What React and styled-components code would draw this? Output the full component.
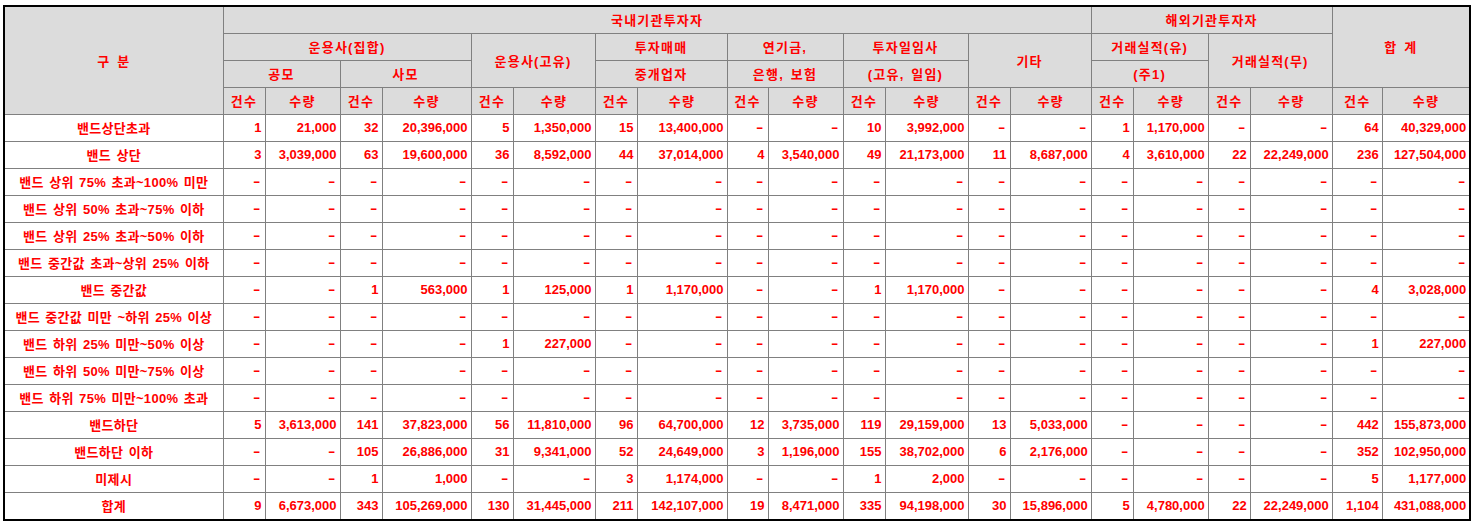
import React from "react";
import styled, { createGlobalStyle } from "styled-components";

const GlobalStyle = createGlobalStyle`
  body {
    margin: 0;
    background: #fff;
  }
`;

const Frame = styled.div`
  display: inline-block;
  margin: 5px 0 0 3px;
  border: 2px solid #000;
`;

const Table = styled.table`
  width: 1464px;
  table-layout: fixed;
  border-collapse: collapse;
  border-style: hidden;
  font-family: "Liberation Sans", "Noto Sans CJK KR", sans-serif;
  font-size: 13px;
  font-weight: bold;
  color: #ff0000;
`;

const Row = styled.tr`
  height: ${(p) => (p.first ? 26 : 27)}px;
`;

const Head = styled.th`
  background: #dcdcdc;
  border: 1px solid #808080;
  font-weight: bold;
  text-align: center;
  padding: 0;
  letter-spacing: 1.2px;
  word-spacing: 2px;
  white-space: nowrap;
`;

const Label = styled.td`
  border: 1px solid #808080;
  text-align: center;
  padding: 0;
  letter-spacing: 0.3px;
  word-spacing: 1.5px;
  white-space: nowrap;
`;

const Num = styled.td`
  border: 1px solid #808080;
  text-align: right;
  padding: 0 3px 0 0;
  white-space: nowrap;
`;

const Dash = styled.span`
  display: inline-block;
  margin-right: 1px;
  transform: scaleX(1.7);
  transform-origin: right center;
`;

const widths = [218, 42, 75, 42, 89, 42, 82, 42, 90, 41, 75, 42, 83, 42, 81, 42, 75, 42, 82, 50, 87];

const D = "-";
const empty = Array(20).fill(D);

const rows = [
  ["밴드상단초과", ["1", "21,000", "32", "20,396,000", "5", "1,350,000", "15", "13,400,000", D, D, "10", "3,992,000", D, D, "1", "1,170,000", D, D, "64", "40,329,000"]],
  ["밴드 상단", ["3", "3,039,000", "63", "19,600,000", "36", "8,592,000", "44", "37,014,000", "4", "3,540,000", "49", "21,173,000", "11", "8,687,000", "4", "3,610,000", "22", "22,249,000", "236", "127,504,000"]],
  ["밴드 상위 75% 초과~100% 미만", empty],
  ["밴드 상위 50% 초과~75% 이하", empty],
  ["밴드 상위 25% 초과~50% 이하", empty],
  ["밴드 중간값 초과~상위 25% 이하", empty],
  ["밴드 중간값", [D, D, "1", "563,000", "1", "125,000", "1", "1,170,000", D, D, "1", "1,170,000", D, D, D, D, D, D, "4", "3,028,000"]],
  ["밴드 중간값 미만 ~하위 25% 이상", empty],
  ["밴드 하위 25% 미만~50% 이상", [D, D, D, D, "1", "227,000", D, D, D, D, D, D, D, D, D, D, D, D, "1", "227,000"]],
  ["밴드 하위 50% 미만~75% 이상", empty],
  ["밴드 하위 75% 미만~100% 초과", empty],
  ["밴드하단", ["5", "3,613,000", "141", "37,823,000", "56", "11,810,000", "96", "64,700,000", "12", "3,735,000", "119", "29,159,000", "13", "5,033,000", D, D, D, D, "442", "155,873,000"]],
  ["밴드하단 이하", [D, D, "105", "26,886,000", "31", "9,341,000", "52", "24,649,000", "3", "1,196,000", "155", "38,702,000", "6", "2,176,000", D, D, D, D, "352", "102,950,000"]],
  ["미제시", [D, D, "1", "1,000", D, D, "3", "1,174,000", D, D, "1", "2,000", D, D, D, D, D, D, "5", "1,177,000"]],
  ["합계", ["9", "6,673,000", "343", "105,269,000", "130", "31,445,000", "211", "142,107,000", "19", "8,471,000", "335", "94,198,000", "30", "15,896,000", "5", "4,780,000", "22", "22,249,000", "1,104", "431,088,000"]],
];

export default function App() {
  return (
    <>
      <GlobalStyle />
      <Frame>
        <Table>
          <colgroup>
            {widths.map((w, i) => (
              <col key={i} style={{ width: w }} />
            ))}
          </colgroup>
          <thead>
            <Row first>
              <Head rowSpan={4}>구 분</Head>
              <Head colSpan={14}>국내기관투자자</Head>
              <Head colSpan={4}>해외기관투자자</Head>
              <Head colSpan={2} rowSpan={3}>합 계</Head>
            </Row>
            <Row>
              <Head colSpan={4}>운용사(집합)</Head>
              <Head colSpan={2} rowSpan={2}>운용사(고유)</Head>
              <Head colSpan={2}>투자매매</Head>
              <Head colSpan={2}>연기금,</Head>
              <Head colSpan={2}>투자일임사</Head>
              <Head colSpan={2} rowSpan={2}>기타</Head>
              <Head colSpan={2}>거래실적(유)</Head>
              <Head colSpan={2} rowSpan={2}>거래실적(무)</Head>
            </Row>
            <Row>
              <Head colSpan={2}>공모</Head>
              <Head colSpan={2}>사모</Head>
              <Head colSpan={2}>중개업자</Head>
              <Head colSpan={2}>은행, 보험</Head>
              <Head colSpan={2}>(고유, 일임)</Head>
              <Head colSpan={2}>(주1)</Head>
            </Row>
            <Row>
              {Array.from({ length: 10 }).map((_, i) => (
                <React.Fragment key={i}>
                  <Head>건수</Head>
                  <Head>수량</Head>
                </React.Fragment>
              ))}
            </Row>
          </thead>
          <tbody>
            {rows.map(([label, vals]) => (
              <Row key={label}>
                <Label>{label}</Label>
                {vals.map((v, i) => (
                  <Num key={i}>{v === D ? <Dash>-</Dash> : v}</Num>
                ))}
              </Row>
            ))}
          </tbody>
        </Table>
      </Frame>
    </>
  );
}
